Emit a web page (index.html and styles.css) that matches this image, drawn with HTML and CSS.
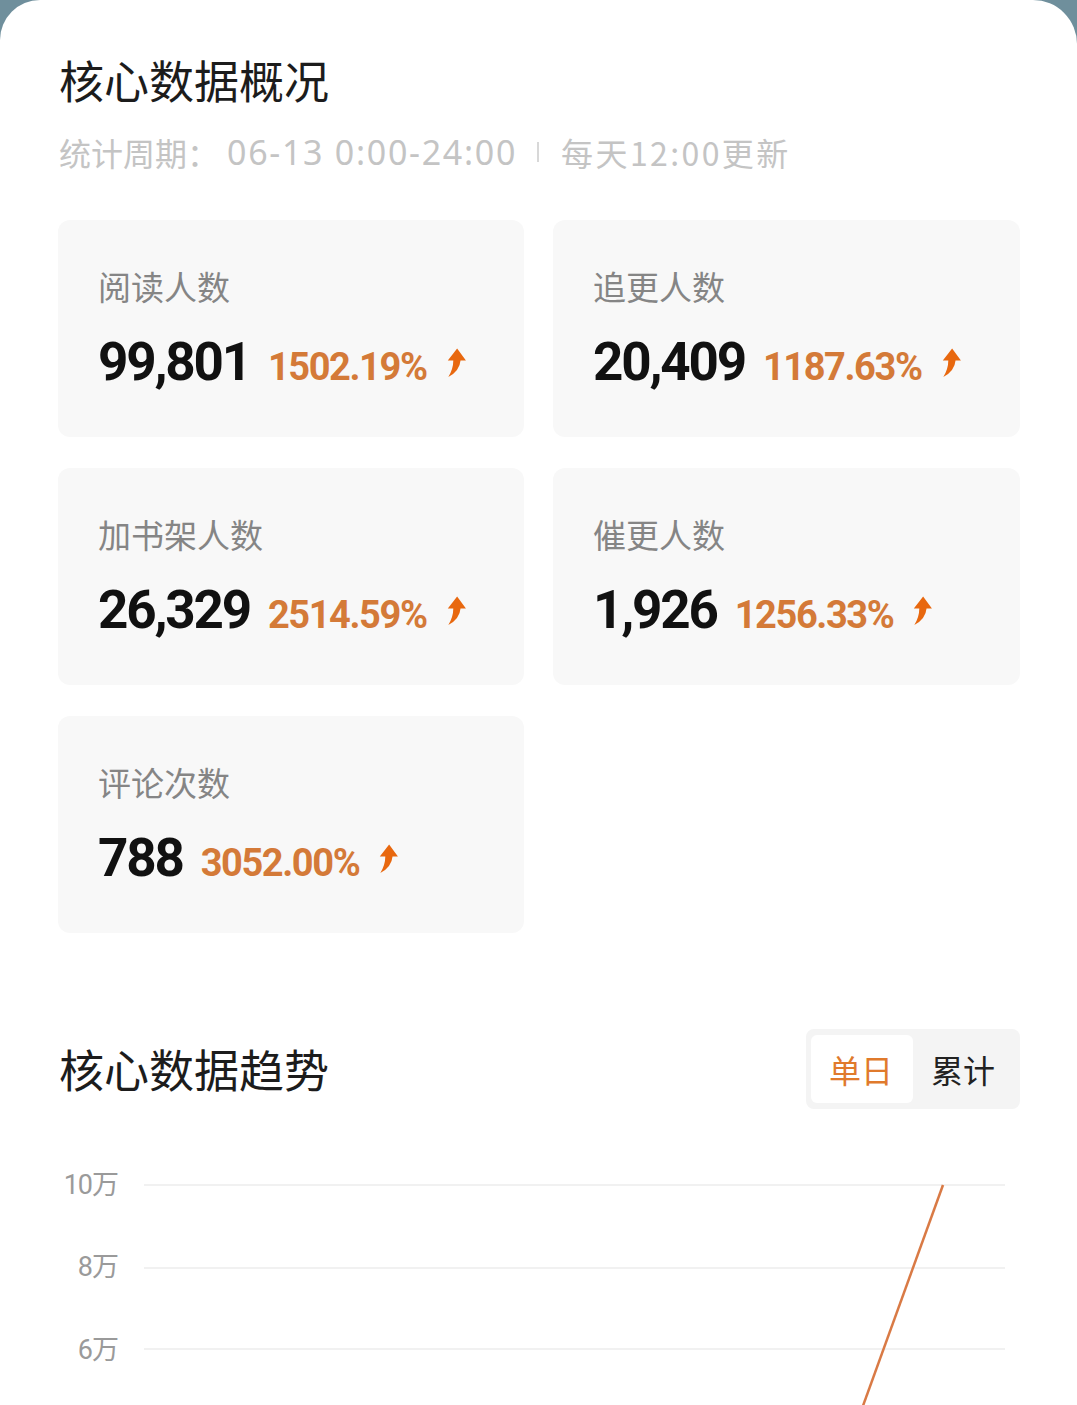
FILE: index.html
```html
<!DOCTYPE html>
<html lang="zh">
<head>
<meta charset="utf-8">
<title>核心数据概况</title>
<link rel="stylesheet" href="styles.css">
</head>
<body>
<div class="panel">
  <h1 class="title">核心数据概况</h1>
  <div class="period">
    <span>统计周期：</span><span class="range">06-13 0:00-24:00</span><span class="sep"></span><span class="daily">每天12:00更新</span>
  </div>

  <div class="cards">
    <div class="card">
      <div class="label">阅读人数</div>
      <div class="values"><span class="num">99,801</span><span class="pct">1502.19%</span><svg class="up" viewBox="0 0 24 28"><path d="M15.5 0.5 L24 12 L18.8 12 Q18 22 7 28 Q11.8 20 11.8 12 L6.5 12 Z"/></svg></div>
    </div>
    <div class="card">
      <div class="label">追更人数</div>
      <div class="values"><span class="num">20,409</span><span class="pct">1187.63%</span><svg class="up" viewBox="0 0 24 28"><path d="M15.5 0.5 L24 12 L18.8 12 Q18 22 7 28 Q11.8 20 11.8 12 L6.5 12 Z"/></svg></div>
    </div>
    <div class="card">
      <div class="label">加书架人数</div>
      <div class="values"><span class="num">26,329</span><span class="pct">2514.59%</span><svg class="up" viewBox="0 0 24 28"><path d="M15.5 0.5 L24 12 L18.8 12 Q18 22 7 28 Q11.8 20 11.8 12 L6.5 12 Z"/></svg></div>
    </div>
    <div class="card">
      <div class="label">催更人数</div>
      <div class="values"><span class="num">1,926</span><span class="pct">1256.33%</span><svg class="up" viewBox="0 0 24 28"><path d="M15.5 0.5 L24 12 L18.8 12 Q18 22 7 28 Q11.8 20 11.8 12 L6.5 12 Z"/></svg></div>
    </div>
    <div class="card">
      <div class="label">评论次数</div>
      <div class="values"><span class="num">788</span><span class="pct">3052.00%</span><svg class="up" viewBox="0 0 24 28"><path d="M15.5 0.5 L24 12 L18.8 12 Q18 22 7 28 Q11.8 20 11.8 12 L6.5 12 Z"/></svg></div>
    </div>
  </div>

  <div class="trend-head">
    <h2 class="title">核心数据趋势</h2>
    <div class="toggle">
      <span class="opt active">单日</span>
      <span class="opt">累计</span>
    </div>
  </div>

  <div class="chart">
    <svg class="chart-svg" viewBox="0 0 1077 280" width="1077" height="280">
      <g class="grid">
        <line x1="144" y1="54" x2="1005" y2="54"/>
        <line x1="144" y1="137" x2="1005" y2="137"/>
        <line x1="144" y1="218" x2="1005" y2="218"/>
      </g>
      <g class="ylabels">
        <text x="118" y="63">10万</text>
        <text x="118" y="145">8万</text>
        <text x="118" y="228">6万</text>
      </g>
      <line class="series" x1="943" y1="54" x2="843" y2="330"/>
    </svg>
  </div>
</div>
</body>
</html>
```

FILE: styles.css
```css
* { box-sizing: border-box; }
html, body { margin: 0; padding: 0; }
body {
  background: #6f8f9c;
  font-family: "Noto Sans CJK SC", "Noto Sans", sans-serif;
  width: 1077px;
  height: 1405px;
  overflow: hidden;
}
.panel {
  background: #ffffff;
  border-radius: 40px 44px 0 0;
  min-height: 1405px;
  padding: 52px 57px 0 58px;
}
.title {
  margin: 0 0 0 1px;
  font-size: 45px;
  line-height: 56px;
  font-weight: 400;
  color: #1c1c1c;
}
.period {
  margin: 24px 0 0 1px;
  font-size: 32px;
  line-height: 40px;
  color: #c4c4c4;
  display: flex;
  align-items: center;
}
.period .range {
  font-family: "Noto Sans", sans-serif;
  font-size: 34px;
  letter-spacing: 1.7px;
  margin-left: 8px;
}
.period .daily { letter-spacing: 2.4px; }
.period .sep {
  display: inline-block;
  width: 2px;
  height: 20px;
  background: #d8d8d8;
  margin: 0 22px 0 20px;
}
.cards {
  margin-top: 48px;
  display: grid;
  grid-template-columns: 466px 467px;
  column-gap: 29px;
  row-gap: 31px;
}
.card {
  background: #f8f8f8;
  border-radius: 12px;
  height: 217px;
  padding: 46px 20px 0 40px;
}
.label {
  font-size: 33px;
  line-height: 40px;
  color: #858585;
}
.values {
  margin-top: 28px;
  display: flex;
  align-items: baseline;
}
.num {
  font-family: "Roboto", "Noto Sans", sans-serif;
  font-weight: 700;
  font-size: 53px;
  line-height: 56px;
  letter-spacing: -2.2px;
  color: #111111;
  margin-right: 18px;
}
.pct {
  font-family: "Roboto", "Noto Sans", sans-serif;
  font-weight: 700;
  font-size: 38px;
  letter-spacing: -1.4px;
  color: #d47a38;
}
.up {
  width: 25px;
  height: 29px;
  margin-left: 14px;
  align-self: center;
  fill: #e8680f;
}
.trend-head {
  margin-top: 96px;
  display: flex;
  justify-content: space-between;
  align-items: center;
}
.toggle {
  background: #f4f4f4;
  border-radius: 8px;
  padding: 6px 25px 6px 5px;
  display: flex;
  align-items: center;
  gap: 18px;
}
.opt {
  font-size: 32px;
  line-height: 68px;
  color: #222222;
}
.opt.active {
  background: #ffffff;
  color: #e07a2c;
  width: 102px;
  padding-left: 18px;
  border-radius: 6px;
}
.chart {
  margin: 22px -57px 0 -58px;
}
.chart-svg { display: block; }
.grid line { stroke: #f1f1f1; stroke-width: 2; }
.ylabels text {
  font-family: "Roboto", "Noto Sans CJK SC", sans-serif;
  font-size: 27px;
  fill: #9a9a9a;
  text-anchor: end;
  letter-spacing: -1px;
}
.series { stroke: #d97a45; stroke-width: 2.5; }
```
